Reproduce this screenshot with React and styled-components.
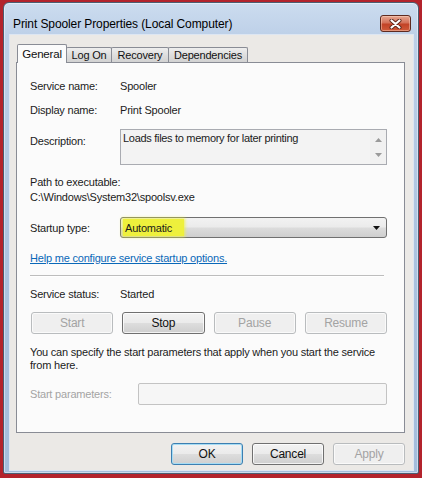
import React from "react";
import styled, { createGlobalStyle } from "styled-components";

const GlobalStyle = createGlobalStyle`
  html, body { margin:0; padding:0; }
  body {
    background:#b3232c;
    font-family:"Liberation Sans", Arial, sans-serif;
    font-size:11px;
    letter-spacing:-0.2px;
    color:#1b1b1b;
  }
  * { box-sizing:border-box; }
`;

const App = () => {
  return (
    <>
      <GlobalStyle />
      <Window>
        <TitleBar>
          <Title>Print Spooler Properties (Local Computer)</Title>
          <CloseButton aria-label="Close">
            <svg width="13" height="10" viewBox="0 0 13 10">
              <path d="M2.5 1.5 L10.5 8.5 M10.5 1.5 L2.5 8.5" stroke="#5a2418" strokeWidth="4" strokeLinecap="round" />
              <path d="M2.5 1.5 L10.5 8.5 M10.5 1.5 L2.5 8.5" stroke="#fff" strokeWidth="2.2" strokeLinecap="round" />
            </svg>
          </CloseButton>
        </TitleBar>
        <Client>
          <TabStrip>
            <Tab $active $w={50}>General</Tab>
            <Tab $w={46}>Log On</Tab>
            <Tab $w={58}>Recovery</Tab>
            <Tab $w={80}>Dependencies</Tab>
          </TabStrip>
          <Panel>
            <FieldRow $mt={0}>
              <Label>Service name:</Label>
              <Value>Spooler</Value>
            </FieldRow>
            <FieldRow $mt={8}>
              <Label>Display name:</Label>
              <Value>Print Spooler</Value>
            </FieldRow>
            <FieldRow $mt={11} $top>
              <Label $pt={4}>Description:</Label>
              <DescBox>
                <DescText>Loads files to memory for later printing</DescText>
                <ScrollCol>
                  <svg width="7" height="4" viewBox="0 0 7 4"><polygon points="0,4 3.5,0 7,4" fill="#9a9a9a" /></svg>
                  <svg width="7" height="4" viewBox="0 0 7 4"><polygon points="0,0 7,0 3.5,4" fill="#9a9a9a" /></svg>
                </ScrollCol>
              </DescBox>
            </FieldRow>
            <PathBlock>
              <div>Path to executable:</div>
              <div>C:\Windows\System32\spoolsv.exe</div>
            </PathBlock>
            <FieldRow $mt={12}>
              <Label>Startup type:</Label>
              <Combo>
                <Highlight>Automatic</Highlight>
                <ComboArrow>
                  <svg width="7" height="4" viewBox="0 0 7 4"><polygon points="0,0 7,0 3.5,4" fill="#111" /></svg>
                </ComboArrow>
              </Combo>
            </FieldRow>
            <HelpLink href="#">Help me configure service startup options.</HelpLink>
            <Separator />
            <FieldRow $mt={9}>
              <Label>Service status:</Label>
              <Value>Started</Value>
            </FieldRow>
            <ButtonGrid>
              <PushButton disabled>Start</PushButton>
              <PushButton>Stop</PushButton>
              <PushButton disabled>Pause</PushButton>
              <PushButton disabled>Resume</PushButton>
            </ButtonGrid>
            <Para>
              You can specify the start parameters that apply when you start the service from here.
            </Para>
            <FieldRow $mt={11}>
              <Label $w={108} $disabled>Start parameters:</Label>
              <ParamInput disabled />
            </FieldRow>
          </Panel>
          <Footer>
            <PushButton $w={72} $default>OK</PushButton>
            <PushButton $w={72}>Cancel</PushButton>
            <PushButton $w={72} disabled>Apply</PushButton>
          </Footer>
        </Client>
      </Window>
    </>
  );
};
export default App;

const Window = styled.div`
  margin:2px 3px 4px 3px;
  width:416px;
  height:472px;
  display:flex;
  flex-direction:column;
  border:1px solid #4b5d72;
  border-radius:6px 6px 2px 2px;
  padding:0 5px 3px 6px;
  background:linear-gradient(180deg,#ccdcef 0%,#bdd0e8 7%,#aac2df 60%,#a4bddc 100%);
  box-shadow:inset 0 0 0 1px rgba(255,255,255,0.45);
`;

const TitleBar = styled.div`
  height:32px;
  flex:none;
  display:flex;
  align-items:flex-end;
  justify-content:space-between;
  padding:0 2px 3px 3px;
`;

const Title = styled.div`
  font-size:12px;
  line-height:16px;
  letter-spacing:-0.1px;
  color:#000;
`;

const CloseButton = styled.div`
  width:31px;
  height:17px;
  border:1px solid #5e2a20;
  border-radius:3px;
  display:flex;
  align-items:center;
  justify-content:center;
  background:linear-gradient(180deg,#e6a792 0%,#d47159 45%,#c24327 55%,#cf5a3a 100%);
  box-shadow:inset 0 0 0 1px rgba(255,220,200,0.45);
`;

const Client = styled.div`
  flex:1;
  display:flex;
  flex-direction:column;
  background:#ebe9e6;
  padding:9px 8px 5px 6px;
  box-shadow:0 0 0 1px #dde6f2;
`;

const TabStrip = styled.div`
  height:18px;
  flex:none;
  display:flex;
  align-items:flex-end;
  padding-left:1px;
  position:relative;
  z-index:1;
`;

const Tab = styled.div`
  width:${p => p.$w}px;
  height:${p => (p.$active ? 19 : 15)}px;
  margin-bottom:${p => (p.$active ? -1 : 0)}px;
  margin-left:${p => (p.$active ? 0 : -1)}px;
  display:flex;
  align-items:center;
  justify-content:center;
  border:1px solid #898c95;
  border-bottom:none;
  border-radius:2px 2px 0 0;
  background:${p => (p.$active ? "#fbfbfb" : "linear-gradient(180deg,#eeeeee 0%,#dedede 50%,#d2d2d2 100%)")};
  color:#111;
  font-size:${p => (p.$active ? 11.5 : 11)}px;
  &:first-child { margin-left:0; }
`;

const Panel = styled.div`
  height:371px;
  flex:none;
  display:flex;
  flex-direction:column;
  border:1px solid #898c95;
  background:#fbfbfb;
  padding:15px 17px 0 13px;
`;

const FieldRow = styled.div`
  display:flex;
  align-items:${p => (p.$top ? "flex-start" : "center")};
  margin-top:${p => p.$mt}px;
  min-height:16px;
`;

const Label = styled.div`
  width:${p => p.$w || 90}px;
  flex:none;
  line-height:16px;
  padding-top:${p => p.$pt || 0}px;
  color:${p => (p.$disabled ? "#a4a4a4" : "inherit")};
`;

const Value = styled.div`
  line-height:16px;
`;

const DescBox = styled.div`
  flex:1;
  height:36px;
  display:flex;
  border:1px solid #a9abb1;
  background:#f3f3f3;
`;

const DescText = styled.div`
  flex:1;
  padding:1px 2px;
  line-height:15px;
  letter-spacing:-0.3px;
`;

const ScrollCol = styled.div`
  width:16px;
  display:flex;
  flex-direction:column;
  align-items:center;
  justify-content:space-between;
  padding:8px 0 7px;
  background:#f1f1f1;
`;

const PathBlock = styled.div`
  margin-top:10px;
  line-height:15px;
`;

const Combo = styled.div`
  flex:1;
  height:21px;
  display:flex;
  align-items:stretch;
  border:1px solid #707070;
  border-radius:3px;
  padding:1px 2px;
  background:linear-gradient(180deg,#f2f2f2 0%,#ebebeb 48%,#dcdcdc 52%,#cfcfcf 100%);
`;

const Highlight = styled.span`
  display:flex;
  align-items:center;
  padding:0 12px 0 2px;
  background:#eef03c;
  box-shadow:0 0 3px 1px rgba(238,240,60,0.8);
  color:#1a1a1a;
`;

const ComboArrow = styled.span`
  margin-left:auto;
  display:flex;
  align-items:center;
  padding-right:4px;
`;

const HelpLink = styled.a`
  margin-top:12px;
  align-self:flex-start;
  line-height:16px;
  color:#0a68b8;
  text-decoration:underline;
`;

const Separator = styled.div`
  margin-top:9px;
  margin-right:3px;
  border-top:1px solid #bdbdbd;
  border-bottom:1px solid #ffffff;
`;

const ButtonGrid = styled.div`
  margin-top:10px;
  padding-left:1px;
  display:grid;
  grid-template-columns:repeat(4,1fr);
  gap:9px;
`;

const PushButton = styled.button`
  width:${p => (p.$w ? `${p.$w}px` : "auto")};
  height:22px;
  font-family:inherit;
  font-size:12px;
  letter-spacing:-0.2px;
  color:#111;
  border:1px solid ${p => (p.$default ? "#3c7fb1" : "#707070")};
  border-radius:3px;
  background:linear-gradient(180deg,#f2f2f2 0%,#ebebeb 48%,#dddddd 52%,#cfcfcf 100%);
  box-shadow:inset 0 0 0 1px ${p => (p.$default ? "#a6dcf4" : "rgba(255,255,255,0.75)")};
  padding:0;
  &:disabled {
    color:#a3a3a3;
    border-color:#b9bcbe;
    background:#efefef;
    box-shadow:inset 0 0 0 1px #fafafa;
  }
`;

const Para = styled.div`
  margin-top:12px;
  line-height:13px;
  padding-right:4px;
`;

const ParamInput = styled.div`
  flex:1;
  height:22px;
  border:1px solid #c3c3c3;
  border-radius:2px;
  background:#f6f6f6;
`;

const Footer = styled.div`
  margin-top:10px;
  display:flex;
  justify-content:flex-end;
  gap:9px;
`;
